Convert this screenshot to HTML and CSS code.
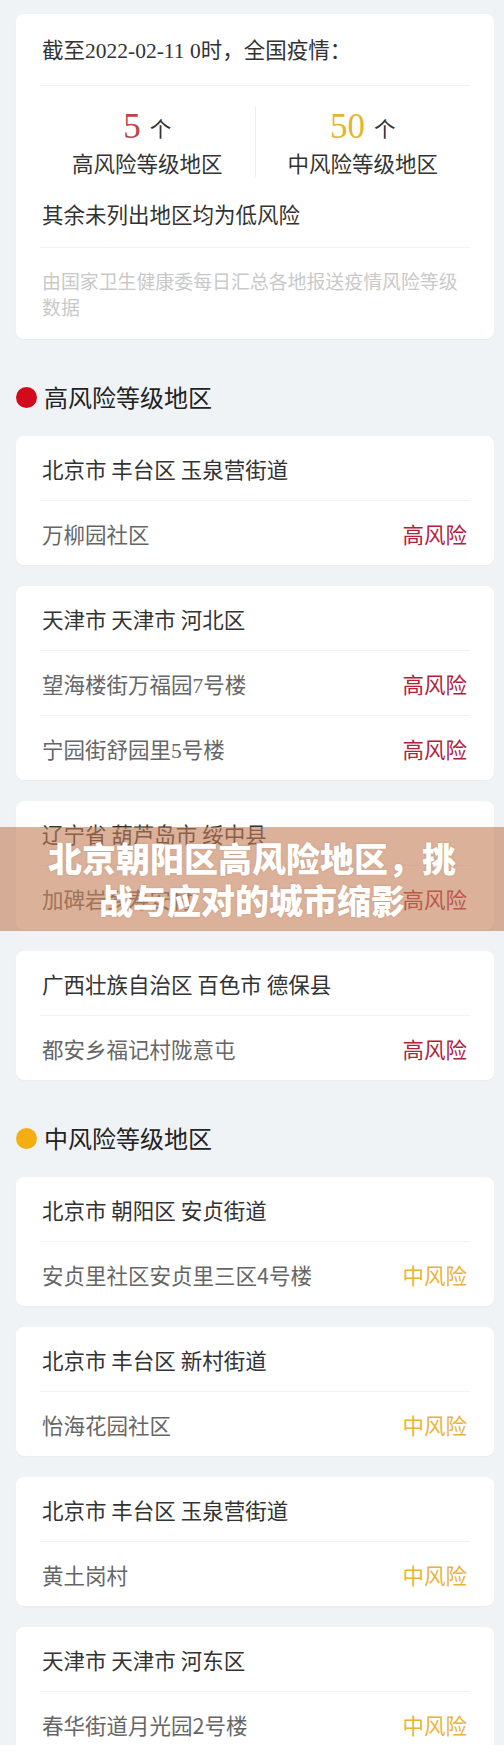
FILE: index.html
```html
<!DOCTYPE html>
<html lang="zh-CN">
<head>
<meta charset="utf-8">
<title>疫情风险等级地区</title>
<link rel="stylesheet" href="styles.css">
</head>
<body>
<div class="page">
  <section class="card summary">
    <div class="summary-head"><span class="serif">截至2022-02-11 0时</span>，全国疫情：</div>
    <div class="stats">
      <div class="stat">
        <div class="stat-num"><span class="num high">5</span> 个</div>
        <div class="stat-label">高风险等级地区</div>
      </div>
      <div class="stat">
        <div class="stat-num"><span class="num mid">50</span> 个</div>
        <div class="stat-label">中风险等级地区</div>
      </div>
    </div>
    <div class="summary-low">其余未列出地区均为低风险</div>
    <div class="summary-note">由国家卫生健康委每日汇总各地报送疫情风险等级数据</div>
  </section>

  <h2 class="section-title"><span class="dot dot-high"></span>高风险等级地区</h2>

  <section class="card list">
    <div class="row row-head">北京市 丰台区 玉泉营街道</div>
    <div class="row"><span class="place">万柳园社区</span><span class="risk risk-high">高风险</span></div>
  </section>
  <section class="card list">
    <div class="row row-head">天津市 天津市 河北区</div>
    <div class="row"><span class="place">望海楼街万福园<span class="serif">7</span>号楼</span><span class="risk risk-high">高风险</span></div>
    <div class="row"><span class="place">宁园街舒园里<span class="serif">5</span>号楼</span><span class="risk risk-high">高风险</span></div>
  </section>
  <section class="card list">
    <div class="row row-head">辽宁省 葫芦岛市 绥中县</div>
    <div class="row"><span class="place">加碑岩乡寿安村</span><span class="risk risk-high">高风险</span></div>
  </section>
  <section class="card list">
    <div class="row row-head">广西壮族自治区 百色市 德保县</div>
    <div class="row"><span class="place">都安乡福记村陇意屯</span><span class="risk risk-high">高风险</span></div>
  </section>

  <h2 class="section-title"><span class="dot dot-mid"></span>中风险等级地区</h2>

  <section class="card list">
    <div class="row row-head">北京市 朝阳区 安贞街道</div>
    <div class="row"><span class="place">安贞里社区安贞里三区4号楼</span><span class="risk risk-mid">中风险</span></div>
  </section>
  <section class="card list">
    <div class="row row-head">北京市 丰台区 新村街道</div>
    <div class="row"><span class="place">怡海花园社区</span><span class="risk risk-mid">中风险</span></div>
  </section>
  <section class="card list">
    <div class="row row-head">北京市 丰台区 玉泉营街道</div>
    <div class="row"><span class="place">黄土岗村</span><span class="risk risk-mid">中风险</span></div>
  </section>
  <section class="card list">
    <div class="row row-head">天津市 天津市 河东区</div>
    <div class="row"><span class="place">春华街道月光园2号楼</span><span class="risk risk-mid">中风险</span></div>
  </section>

  <div class="banner">北京朝阳区高风险地区，挑战与应对的城市缩影</div>
</div>
</body>
</html>
```

FILE: styles.css
```css
html, body {
  margin: 0;
  padding: 0;
  background: #ffffff;
}

body {
  font-family: "Noto Sans CJK SC", "Noto Sans", sans-serif;
  color: #333333;
}

.page {
  position: relative;
  height: 1745px;
  overflow: hidden;
  background: #eff3f6;
  padding: 14px 10px 0 16px;
  box-sizing: border-box;
}

.serif {
  font-family: "Liberation Serif", "Noto Sans CJK SC", serif;
}

.card {
  background: #ffffff;
  border-radius: 8px;
  padding: 0 24px;
  margin-bottom: 21px;
  box-shadow: 0 1px 2px rgba(0, 0, 0, 0.03);
}

/* summary card */
.summary-head {
  font-size: 21.5px;
  line-height: 32px;
  padding: 19px 2px 18px;
  border-bottom: 1px solid #f2f2f2;
  color: #333;
}

.stats {
  display: flex;
  padding-top: 20px;
}

.stat {
  flex: 1;
  text-align: center;
}

.stat + .stat {
  border-left: 1px solid #eeeeee;
}

.stat-num {
  height: 42px;
  line-height: 42px;
  font-size: 21.5px;
  color: #333;
}

.num {
  font-family: "Liberation Serif", serif;
  font-size: 35px;
  vertical-align: -1px;
  margin-right: 4px;
}

.num.high { color: #b9474a; }
.num.mid { color: #e7b42f; }

.stat-label {
  font-size: 21.5px;
  line-height: 29px;
  color: #333;
}

.summary-low {
  font-size: 21.5px;
  line-height: 32px;
  margin-top: 21px;
  padding: 0 2px 17px;
  border-bottom: 1px solid #f2f2f2;
  color: #333;
}

.summary-note {
  font-size: 18.9px;
  line-height: 26px;
  padding: 20px 2px 19px;
  color: #c9c9c9;
}

/* section titles */
.section-title {
  display: flex;
  align-items: center;
  gap: 7px;
  margin: 42px 0 23px;
  font-size: 24px;
  line-height: 32px;
  font-weight: normal;
  color: #222;
}

.dot {
  width: 21px;
  height: 21px;
  border-radius: 50%;
  flex: none;
}

.dot-high { background: #d10a1c; }
.dot-mid { background: #f5ad14; }

/* list cards */
.row {
  display: flex;
  align-items: center;
  justify-content: space-between;
  height: 64px;
  padding: 0 3px 0 2px;
  font-size: 21.5px;
  color: #666666;
}

.row + .row {
  border-top: 1px solid #f2f2f2;
}

.row-head {
  color: #333333;
}

.risk-high { color: #b3223b; }
.risk-mid { color: #eab337; }

/* overlay banner */
.banner {
  position: absolute;
  left: 0;
  right: 0;
  top: 827px;
  padding: 10px 40px;
  background: rgba(195, 125, 85, 0.6);
  color: #ffffff;
  font-size: 34px;
  line-height: 42px;
  font-weight: 900;
  text-align: center;
  text-shadow: 0 0 2px rgba(120, 70, 40, 0.25);
}
```
